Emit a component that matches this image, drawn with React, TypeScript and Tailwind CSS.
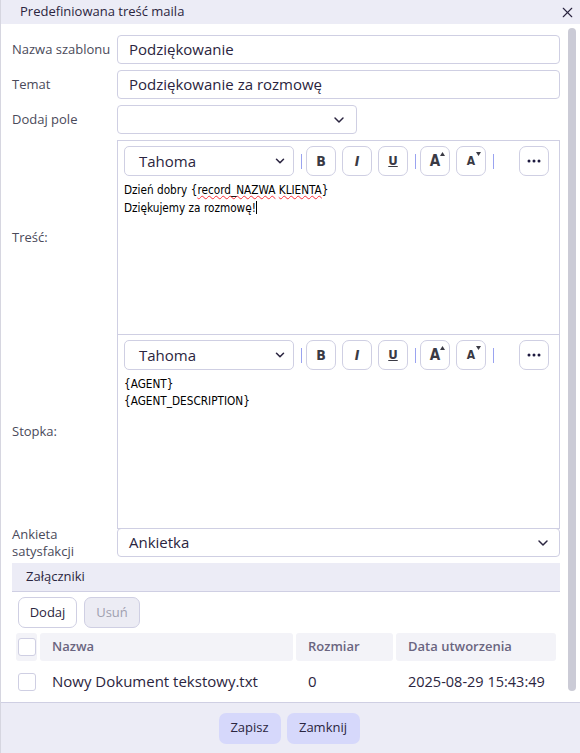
import { ChevronDown, X } from "lucide-react";

const ui = { fontFamily: '"Open Sans", "Noto Sans", sans-serif' };
const tahoma = { fontFamily: '"DejaVu Sans Condensed", "DejaVu Sans", Verdana, sans-serif' };

function Label({ children }: { children: React.ReactNode }) {
  return <div className="w-[105px] shrink-0 text-[13px] leading-[15px] text-[#4a4a5a]">{children}</div>;
}

function TextInput({ value }: { value: string }) {
  return (
    <div className="flex h-[29px] flex-1 items-center rounded-[4px] border border-[#cfcfe3] px-[11px] text-[15px] text-[#2b2540]">
      {value}
    </div>
  );
}

function ToolBtn({ children }: { children: React.ReactNode }) {
  return (
    <div className="grid h-[30px] w-[30px] place-items-center rounded-[7px] border border-[#cfcfe3] bg-white text-[#3a3a44]">
      {children}
    </div>
  );
}

function Sep() {
  return <div className="ml-[7px] mr-[4px] h-[15px] w-px bg-[#9aa3f0]" />;
}

function Editor({ lines, spell }: { lines: string[]; spell?: boolean }) {
  return (
    <div className="flex h-[195px] flex-1 flex-col border border-[#cfcfe3] px-[6px] pt-[5px]">
      <div className="flex items-center">
        <div className="flex h-[30px] w-[170px] items-center justify-between rounded-[5px] border border-[#cfcfe3] pl-[14px] pr-[6px] text-[15px] text-[#2b2540]">
          <span>Tahoma</span>
          <ChevronDown size={14} strokeWidth={2.6} className="text-[#2b2540]" />
        </div>
        <Sep />
        <div className="flex items-center gap-[6px]">
          <ToolBtn>
            <span className="text-[14px] font-bold" style={tahoma}>B</span>
          </ToolBtn>
          <ToolBtn>
            <span className="text-[14px] font-bold italic" style={tahoma}>I</span>
          </ToolBtn>
          <ToolBtn>
            <span className="text-[13px] font-semibold underline" style={tahoma}>U</span>
          </ToolBtn>
        </div>
        <Sep />
        <div className="flex items-center gap-[6px]">
          <ToolBtn>
            <span className="relative text-[15px] font-bold" style={tahoma}>
              A
              <svg className="absolute -right-[5px] top-[2px]" width="5" height="4" viewBox="0 0 5 4">
                <path d="M0 4 L2.5 0 L5 4 Z" fill="#3a3a44" />
              </svg>
            </span>
          </ToolBtn>
          <ToolBtn>
            <span className="relative text-[12px] font-bold" style={tahoma}>
              A
              <svg className="absolute -right-[6px] top-[0px]" width="5" height="4" viewBox="0 0 5 4">
                <path d="M0 0 L5 0 L2.5 4 Z" fill="#3a3a44" />
              </svg>
            </span>
          </ToolBtn>
        </div>
        <Sep />
        <div className="ml-[21px]">
          <ToolBtn>
            <svg width="14" height="4" viewBox="0 0 14 4">
              <circle cx="2" cy="2" r="1.5" fill="#1e1a40" />
              <circle cx="7" cy="2" r="1.5" fill="#1e1a40" />
              <circle cx="12" cy="2" r="1.5" fill="#1e1a40" />
            </svg>
          </ToolBtn>
        </div>
      </div>
      <div className="mt-[6px] text-[11.7px] leading-[17px] text-black" style={tahoma}>
        {lines.map((l, i) =>
          spell && i === 0 ? (
            <div key={i}>
              Dzień dobry {"{"}
              <span className="underline decoration-red-500 decoration-wavy decoration-1">record_NAZWA</span>{" "}
              <span className="underline decoration-red-500 decoration-wavy decoration-1">KLIENTA</span>
              {"}"}
            </div>
          ) : (
            <div key={i}>
              {l}
              {spell && i === 1 && <span className="inline-block h-[13px] w-px translate-y-[2px] bg-black" />}
            </div>
          )
        )}
      </div>
    </div>
  );
}

export default function App() {
  return (
    <div className="flex h-[753px] w-[580px] flex-col border-l border-[#d6d6e0] bg-white" style={ui}>
      <div className="flex h-[24px] shrink-0 items-center justify-between bg-[#ececf6] pl-[19px] pr-[4px]">
        <span className="text-[13px] text-[#2b2540]">Predefiniowana treść maila</span>
        <X size={17} strokeWidth={1.6} className="text-[#2b2540]" />
      </div>

      <div className="flex min-h-0 flex-1">
        <div className="flex flex-1 flex-col pl-[11px] pr-[8px] pt-[11px]">
          <div className="flex items-center">
            <Label>Nazwa szablonu</Label>
            <TextInput value="Podziękowanie" />
          </div>
          <div className="mt-[6px] flex items-center">
            <Label>Temat</Label>
            <TextInput value="Podziękowanie za rozmowę" />
          </div>
          <div className="mt-[6px] flex items-center">
            <Label>Dodaj pole</Label>
            <div className="flex h-[29px] w-[240px] items-center justify-end rounded-[4px] border border-[#cfcfe3] pr-[9px]">
              <ChevronDown size={16} strokeWidth={2.2} className="text-[#2b2540]" />
            </div>
          </div>
          <div className="mt-[6px] flex items-center">
            <Label>Treść:</Label>
            <Editor lines={["Dzień dobry {record_NAZWA KLIENTA}", "Dziękujemy za rozmowę!"]} spell />
          </div>
          <div className="-mt-px flex items-center">
            <Label>Stopka:</Label>
            <Editor lines={["{AGENT}", "{AGENT_DESCRIPTION}"]} />
          </div>
          <div className="-mt-px flex items-center">
            <div className="-my-[3px] w-[105px] shrink-0 text-[13px] leading-[17px] text-[#4a4a5a]">
              <div>Ankieta</div>
              <div>satysfakcji</div>
            </div>
            <div className="flex h-[29px] flex-1 items-center justify-between rounded-[4px] border border-[#cfcfe3] pl-[11px] pr-[8px] text-[15px] text-[#2b2540]">
              <span>Ankietka</span>
              <ChevronDown size={16} strokeWidth={2.2} />
            </div>
          </div>

          <div className="mt-[6px] flex h-[30px] items-center border-b border-[#cfcfe3] bg-[#ececf6] pl-[14px] text-[13px] text-[#2b2540]">
            Załączniki
          </div>
          <div className="flex gap-[7px] pl-[6px] pt-[5px]">
            <div className="flex h-[31px] w-[59px] items-center justify-center rounded-[7px] border border-[#cfcfe3] bg-white text-[13px] text-[#2b2540]">
              Dodaj
            </div>
            <div className="flex h-[31px] w-[56px] items-center justify-center rounded-[7px] border border-[#cfcfe3] bg-[#ececf4] text-[13px] text-[#a0a0b0]">
              Usuń
            </div>
          </div>
          <div className="flex gap-[3px] pl-[4px] pr-[4px] pt-[5px] text-[13px] font-semibold text-[#6a6580]">
            <div className="flex h-[28px] w-[21px] items-center justify-center rounded-[3px] bg-[#f3f3f8]">
              <div className="h-[18px] w-[18px] rounded-[3px] border border-[#cfcfe3] bg-white" />
            </div>
            <div className="flex h-[28px] flex-1 items-center rounded-[3px] bg-[#f3f3f8] pl-[12px]">Nazwa</div>
            <div className="flex h-[28px] w-[97px] items-center rounded-[3px] bg-[#f3f3f8] pl-[12px]">Rozmiar</div>
            <div className="flex h-[28px] w-[160px] items-center rounded-[3px] bg-[#f3f3f8] pl-[12px]">
              Data utworzenia
            </div>
          </div>
          <div className="flex h-[42px] items-center gap-[3px] pl-[6px] pr-[4px] text-[15px] text-[#2b2540]">
            <div className="h-[18px] w-[18px] rounded-[3px] border border-[#cfcfe3] bg-white" />
            <div className="flex-1 pl-[13px]">Nowy Dokument tekstowy.txt</div>
            <div className="w-[97px] pl-[12px]">0</div>
            <div className="w-[160px] pl-[12px] text-[14.5px]">2025-08-29 15:43:49</div>
          </div>
        </div>
        <div className="w-[12px] shrink-0 pt-[4px]">
          <div className="h-[663px] w-[8px] rounded-[4px] bg-[#cbcbd6]" />
        </div>
      </div>

      <div className="flex h-[51px] shrink-0 items-center justify-center gap-[6px] border-t border-[#cfcfe3] bg-[#ececf6] pr-[3px]">
        <div className="flex h-[31px] w-[62px] items-center justify-center rounded-[7px] bg-[#d6d8fb] text-[13px] text-[#2b2540]">
          Zapisz
        </div>
        <div className="flex h-[31px] w-[73px] items-center justify-center rounded-[7px] bg-[#d6d8fb] text-[13px] text-[#2b2540]">
          Zamknij
        </div>
      </div>
    </div>
  );
}
